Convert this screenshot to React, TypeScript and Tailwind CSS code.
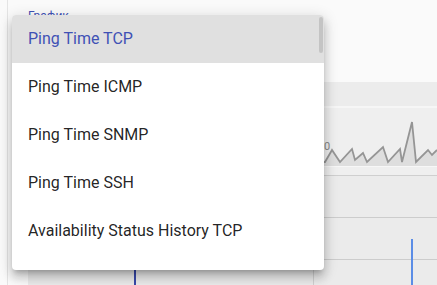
import React from 'react';

const items = [
  'Ping Time TCP',
  'Ping Time ICMP',
  'Ping Time SNMP',
  'Ping Time SSH',
  'Availability Status History TCP',
];

// sparkline points, relative to the sparkline row (x - 28, y - 108)
const spark: [number, number][] = [
  [290, 54], [297, 54], [304, 42], [312, 54], [324, 41], [327, 52], [335, 45],
  [339, 54], [355, 39], [360, 54], [372, 41], [374, 54], [384, 14], [388, 54],
  [400, 42], [404, 47], [409, 42],
];

const App: React.FC = () => {
  const line = spark.map(([x, y]) => `${x},${y}`).join(' ');
  const area = `290,58 ${line} 409,58`;

  return (
    <div className="relative h-[285px] w-[437px] overflow-hidden bg-[#fafafa] font-['Roboto',sans-serif]">
      <div className="ml-[7px] flex h-full flex-col border-l border-[#e4e4e4] bg-[#fafafa] pl-[20px]">
        <div className="h-[82px] pt-[3px]">
          <span className="text-[12px] leading-[14px] text-[#3f51b5]">График</span>
        </div>

        <div className="h-[24px] bg-[#ececec]" />
        <div className="h-[2px] bg-[#f6f6f6]" />

        <div className="relative h-[68px] border-b border-[#cfcfcf] bg-[#efefef]">
          <svg className="absolute inset-0" width="409" height="68">
            <polygon points={area} fill="#dedede" />
            <polyline points={line} fill="none" stroke="#959595" strokeWidth="1.8" strokeLinejoin="miter" />
            <line x1="0" y1="58.5" x2="409" y2="58.5" stroke="#f7f7f7" strokeWidth="1" />
            <text x="296" y="42" fontSize="11" fill="#888" fontFamily="Roboto, sans-serif">0</text>
          </svg>
        </div>

        <div className="relative flex-1 bg-[#ebebeb]">
          <svg className="absolute inset-0" width="409" height="110">
            <line x1="0" y1="41.5" x2="409" y2="41.5" stroke="#cccccc" />
            <line x1="0" y1="83.5" x2="409" y2="83.5" stroke="#cccccc" />
            <line x1="285.5" y1="0" x2="285.5" y2="110" stroke="#d0d0d0" />
            <rect x="106" y="60" width="2" height="50" fill="#3949ab" />
            <rect x="383" y="63" width="2" height="50" fill="#5b8de6" />
          </svg>
        </div>
      </div>

      <div className="absolute left-[12px] top-[15px] h-[255px] w-[312px] overflow-hidden rounded-[4px] bg-white shadow-[0_5px_5px_-3px_rgba(0,0,0,0.2),0_8px_10px_1px_rgba(0,0,0,0.14),0_3px_14px_2px_rgba(0,0,0,0.12)]">
        {items.map((label, i) => (
          <div
            key={label}
            className={
              i === 0
                ? 'flex h-12 items-center bg-[#e0e0e0] px-4 text-base text-[#3f51b5]'
                : 'flex h-12 items-center px-4 text-base text-[rgba(0,0,0,0.87)]'
            }
          >
            {label}
          </div>
        ))}
        <div className="absolute right-[1px] top-[2px] h-[36px] w-[4px] rounded-full bg-[#c4c4c4]" />
      </div>
    </div>
  );
};

export default App;
